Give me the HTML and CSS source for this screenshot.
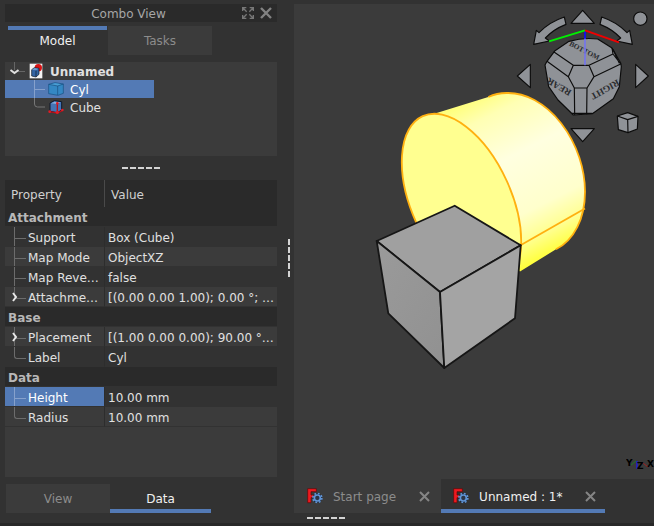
FILE: index.html
```html
<!DOCTYPE html>
<html lang="en">
<head>
<meta charset="utf-8">
<title>Unnamed : 1*</title>
<link rel="stylesheet" href="styles.css">
</head>
<body>
<div class="app">
  <aside class="dock">
    <header class="dock-title">
      <h1>Combo View</h1>
      <button class="icon-btn" aria-label="Float"><svg width="12" height="12" viewBox="0 0 36 36" fill="none" stroke="#777" stroke-width="4"><path d="M2 12V2h11M23 2h11v10M34 24v10H23M13 34H2V24M4 4l10 10M32 4L22 14M32 32L22 22M4 32l10-10"/></svg></button>
      <button class="icon-btn" aria-label="Close panel"><svg width="12" height="12" viewBox="0 0 12 12" fill="none" stroke="#828282" stroke-width="2.400"><path d="M1 1l10 10M11 1L1 11"/></svg></button>
    </header>

    <div class="tabs top-tabs" role="tablist">
      <button class="tab active" role="tab" aria-selected="true">Model</button>
      <button class="tab" role="tab" aria-selected="false">Tasks</button>
    </div>

    <ul class="tree">
      <li class="node root">
        <svg class="branch" width="24" height="18" viewBox="0 0 24 18" fill="none"><path d="M9.500 0v8M12 9.500h8" stroke="#666"/><path d="M5.500 8l4 3 4-3" stroke="#e0e0e0" stroke-width="2"/></svg>
        <svg class="node-icon" width="14" height="16" viewBox="0 0 42 48"><path fill="#f4f4f4" d="M2 2h38v44H2z"/><circle cx="28" cy="14" r="11" fill="#d81416"/><path d="M8 20l8-6 14 2v18l-9 8-13-3z" fill="#3465a4" stroke="#0b1521" stroke-width="2"/><path d="M9 20l8-5 12 2-8 5z" fill="#6d9bd0"/><path d="M21 23v18" fill="none" stroke="#0b1521" stroke-width="2"/></svg>
        <span>Unnamed</span>
      </li>
      <li class="node child selected">
        <svg class="branch" width="24" height="18" viewBox="0 0 24 18" fill="none" stroke="#86a1cc"><path d="M9.500 0v18M10 9.500h10"/></svg>
        <svg class="node-icon" width="16" height="14" viewBox="0 0 48 42"><path fill="#3488c4" stroke="#174e80" stroke-width="2" stroke-linejoin="round" d="M2 7L21 2l25 4v28l-16 6L2 35z"/><path fill="#4a9fd4" d="M5 8l16-4 20 3-12 4z"/><path fill="none" stroke="#194f7e" stroke-width="2" d="M2 7l27 5 17-6M29 12v27"/></svg>
        <span>Cyl</span>
      </li>
      <li class="node child">
        <svg class="branch" width="24" height="18" viewBox="0 0 24 18" fill="none" stroke="#777"><path d="M9.500 0v6q0 3 3 3h7.500"/></svg>
        <svg class="node-icon" width="16" height="14" viewBox="0 0 48 42"><path fill="#4573b5" stroke="#10192b" stroke-width="3" d="M6 9l13-7 22 3v25l-13 8-22-4z"/><path fill="#88aede" d="M9 10l11-5 17 2-9 5z"/><path fill="none" stroke="#b81018" stroke-width="4" d="M4 35l24 4 16-8M28 37V10"/><g fill="#e01b24"><circle cx="5" cy="35" r="4"/><circle cx="28" cy="37" r="5"/><circle cx="43" cy="30" r="4"/><circle cx="28" cy="10" r="4"/></g></svg>
        <span>Cube</span>
      </li>
    </ul>

    <div class="grip"></div>

    <div class="props">
      <table>
        <thead><tr><th scope="col">Property</th><th scope="col">Value</th></tr></thead>
        <tbody>
          <tr class="group"><th colspan="2">Attachment</th></tr>
          <tr><td class="name mid">Support</td><td>Box (Cube)</td></tr>
          <tr class="alt"><td class="name mid">Map Mode</td><td>ObjectXZ</td></tr>
          <tr><td class="name mid">Map Reve…</td><td>false</td></tr>
          <tr class="alt"><td class="name last"><svg class="expander" width="6" height="10" viewBox="0 0 6 10" fill="none" stroke="#e8e8e8" stroke-width="2"><path d="M1 1l3 4-3 4"/></svg>Attachme…</td><td>[(0.00 0.00 1.00); 0.00 °; …</td></tr>
          <tr class="group"><th colspan="2">Base</th></tr>
          <tr class="alt"><td class="name mid"><svg class="expander" width="6" height="10" viewBox="0 0 6 10" fill="none" stroke="#e8e8e8" stroke-width="2"><path d="M1 1l3 4-3 4"/></svg>Placement</td><td>[(1.00 0.00 0.00); 90.00 °…</td></tr>
          <tr><td class="name last">Label</td><td>Cyl</td></tr>
          <tr class="group"><th colspan="2">Data</th></tr>
          <tr class="current"><td class="name mid">Height</td><td>10.00 mm</td></tr>
          <tr class="alt"><td class="name last">Radius</td><td>10.00 mm</td></tr>
        </tbody>
      </table>
    </div>

    <div class="tabs bottom-tabs" role="tablist">
      <button class="tab" role="tab" aria-selected="false">View</button>
      <button class="tab active" role="tab" aria-selected="true">Data</button>
    </div>
  </aside>

  <div class="grip vertical"></div>

  <main class="workspace">
    <section class="viewport">
      <svg class="scene" viewBox="294 4 360 475" preserveAspectRatio="xMidYMid meet" role="img" aria-label="3D model">
        <defs>
          <linearGradient id="side" gradientUnits="userSpaceOnUse" x1="458" y1="104" x2="538" y2="262">
            <stop offset="0" stop-color="#ffff78"/><stop offset=".14" stop-color="#ffffb4"/><stop offset=".4" stop-color="#ffffe0"/><stop offset=".72" stop-color="#ffffcc"/><stop offset=".87" stop-color="#ffff90"/><stop offset="1" stop-color="#ffff38"/>
          </linearGradient>
          <linearGradient id="left" x1="0" y1="0" x2="1" y2="1"><stop offset="0" stop-color="#9a9a9a"/><stop offset="1" stop-color="#919191"/></linearGradient>
        </defs>
        <path fill="url(#side)" d="M435 113.500L488.300 97A83.200 58.700 69.200 0 1 508 93A83.200 58.700 69.200 0 1 585 191.700A83.200 58.700 69.200 0 1 556 249.300L520 271.500L450 230z"/>
        <path fill="none" stroke="#ffb010" stroke-width="1.800" d="M488.300 97A83.200 58.700 69.200 0 1 508 93A83.200 58.700 69.200 0 1 585 191.700A83.200 58.700 69.200 0 1 556 249.300"/>
        <ellipse cx="461.500" cy="201.700" rx="93.900" ry="49.800" transform="rotate(65.600 461.500 201.700)" fill="#ffff90" stroke="#ffb010" stroke-width="1.800"/>
        <path stroke="#ffb010" stroke-width="1.800" d="M521 245l64-36.500"/>
        <g stroke="#161616" stroke-width="1.800" stroke-linejoin="round">
          <path fill="#a0a0a0" d="M376.700 241L454.700 205.700L520.700 245.300L440 292z"/>
          <path fill="url(#left)" d="M376.700 241L440 292L444.300 368L388.300 313.300z"/>
          <path fill="#a4a4a4" d="M440 292L520.700 245.300L515 318.300L444.300 368z"/>
        </g>
      </svg>
      <svg class="navcube" width="144" height="146" viewBox="0 12 432 438" role="img" aria-label="Navigation cube">
        <g fill="#8f9297" stroke="#0c0c0c" stroke-width="3.500" stroke-linejoin="round">
          <path d="M218 31l35 39h-70zM218 425l-35-39h70zM22 228l39-35v70zM415 228l-38-35v70z"/>
          <circle cx="391" cy="56" r="20"/>
          <path d="M163 51Q118 66 87 98L79 91L71 133L118 123L106 114Q130 88 168 73z"/>
          <path d="M275 51Q320 66 351 98L359 91L367 133L320 123L332 114Q308 88 270 73z"/>
          <path d="M322 348l31-10 31 11-2 38-28 11-29-9z"/><path fill="none" d="M322 348l31 11 31-10M353 359l1 38"/>
          <path d="M135 152L177 124Q218 112 263 117L306 144L332 189L334 200L328 260L310 296L247 341L190 345L144 300L116 260L105 195L111 184z"/>
          <path fill="none" d="M131 155L190 196H237L309 162L306 144M190 196L175 230L193 264H231L252 230L237 196M111 184L175 230M252 230L332 192L309 162M193 264L194 345M231 264L230 343M309 148L328 190M186 340H247"/>
        </g>
        <g class="face-label">
          <text font-size="22" transform="translate(176 136) rotate(27)">BOTTOM</text>
          <text font-size="28" transform="translate(186 272) rotate(210)">REAR</text>
          <text font-size="28" transform="translate(322 238) rotate(151)">RIGHT</text>
        </g>
        <path d="M225 92v104" stroke="#7474ef" stroke-width="5"/><path d="M225 92v24" stroke="#0000e8" stroke-width="5"/>
        <path d="M117 124l108-33" stroke="#00f000" stroke-width="6"/><path d="M225 91l102 36" stroke="#f00000" stroke-width="6"/>
      </svg>
      <svg class="axes" width="28" height="16" viewBox="0 0 28 16"><path d="M5 8l5-4" stroke="#1b7a25"/><path d="M11 4v8" stroke="#2525b0" stroke-width="2"/><path d="M17 6l5 4" stroke="#a02020"/><g class="axis-label"><text x="0" y="9">Y</text><text x="11" y="12">Z</text><text x="21" y="10">X</text></g></svg>
    </section>

    <div class="doc-tabs">
      <div class="doc-tab">
        <svg width="16" height="16" viewBox="0 0 48 48"><path fill="#ee1a20" stroke="#5d0808" stroke-width="2" d="M2 2h26v9H12v10h12v8H12v15H2z"/><circle cx="31" cy="30" r="14" fill="#1b2740"/><circle cx="31" cy="30" r="9" fill="#2c3444" stroke="#6094d4" stroke-width="5"/><circle cx="31" cy="30" r="13.500" fill="none" stroke="#6094d4" stroke-width="5" stroke-dasharray="5.300 5.300"/></svg>
        <button class="doc-name">Start page</button>
        <button class="icon-btn" aria-label="Close Start page"><svg width="11" height="11" viewBox="0 0 11 11" stroke="#858585" stroke-width="2"><path d="M1 1l9 9M10 1L1 10"/></svg></button>
      </div>
      <div class="doc-tab active">
        <svg width="16" height="16" viewBox="0 0 48 48"><path fill="#ee1a20" stroke="#5d0808" stroke-width="2" d="M2 2h26v9H12v10h12v8H12v15H2z"/><circle cx="31" cy="30" r="14" fill="#1b2740"/><circle cx="31" cy="30" r="9" fill="#2c3444" stroke="#6094d4" stroke-width="5"/><circle cx="31" cy="30" r="13.500" fill="none" stroke="#6094d4" stroke-width="5" stroke-dasharray="5.300 5.300"/></svg>
        <button class="doc-name">Unnamed : 1*</button>
        <button class="icon-btn" aria-label="Close Unnamed"><svg width="11" height="11" viewBox="0 0 11 11" stroke="#858585" stroke-width="2"><path d="M1 1l9 9M10 1L1 10"/></svg></button>
      </div>
    </div>
    <div class="grip bottom"></div>
  </main>
</div>
</body>
</html>
```
FILE: styles.css
```css
* { box-sizing: border-box; }
body {
  margin: 0;
  background: #323232;
  color: #e0e0e0;
  font: 12px/18px "DejaVu Sans", sans-serif;
}
button {
  padding: 0;
  border: 0;
  background: none;
  color: inherit;
  font: inherit;
}
svg { display: block; flex: none; }
.app {
  display: grid;
  grid-template-columns: 280px 14px minmax(0, 1fr);
  min-height: 100vh;
  padding-top: 4px;
  border-bottom: 3px solid #282828;
}

/* Dock */
.dock {
  display: flex;
  flex-direction: column;
  padding: 0 3px 10px 5px;
}
.dock-title {
  display: flex;
  align-items: center;
  gap: 6px;
  height: 18px;
  padding-right: 5px;
  background: #2a2a2a;
}
.dock-title h1 {
  flex: 1;
  margin: 0;
  padding: 2px 0 0 16px;
  color: #a6a6a6;
  font: inherit;
  text-align: center;
}
.tabs { display: flex; }
.tab {
  width: 104px;
  height: 29px;
  background: #3b3b3b;
  color: #8c8c8c;
}
.tab.active { background: #323232; color: #f0f0f0; }
.top-tabs { gap: 1px; margin: 4px 0 7px 3px; }
.top-tabs .tab.active { width: 99px; border-top: 4px solid #537ab5; padding-bottom: 4px; }
.bottom-tabs { margin: 7px 0 0 1px; }
.bottom-tabs .tab.active { width: 101px; border-bottom: 4px solid #537ab5; padding-top: 4px; }

/* Tree */
.tree {
  height: 94px;
  margin: 0;
  padding: 0;
  background: #3b3b3b;
  list-style: none;
}
.node {
  display: flex;
  align-items: center;
  height: 18px;
}
.node span { padding-top: 2px; }
.root { font-weight: 700; }
.root .node-icon { margin-right: 7px; }
.child { width: 149px; padding-left: 20px; }
.child .node-icon { margin: 0 6px 0 -1px; }
.selected { background: #537ab5; color: #fff; }

/* Splitter grips */
.grip {
  width: 38px;
  height: 2px;
  margin: 11px auto;
  background: repeating-linear-gradient(90deg, #d4d4d4 0 6px, transparent 6px 8px);
}
.grip.vertical {
  width: 2px;
  height: 38px;
  margin: 0 0 12px 8px;
  align-self: center;
  background: repeating-linear-gradient(#d4d4d4 0 6px, transparent 6px 8px);
}
.grip.bottom { margin: 4px 0 4px 13px; }

/* Property editor */
.props { flex: 1; background: #3b3b3b; }
table {
  width: 100%;
  border-collapse: separate;
  border-spacing: 0;
  table-layout: fixed;
}
th, td {
  overflow: hidden;
  height: 20px;
  padding: 3px 0 0 3px;
  border-bottom: 1px solid #323232;
  line-height: 16px;
  text-align: left;
  text-overflow: ellipsis;
  white-space: nowrap;
}
td { background: #323232; }
thead th {
  height: 27px;
  padding: 2px 0 0 6px;
  border: 0;
  background: #2a2a2a;
  color: #d0d0d0;
  font-weight: 400;
}
thead th:first-child { width: 100px; border-right: 1px solid #4a4a4a; }
.group th { background: #2a2a2a; color: #b8b8b8; }
.alt td { background: #3b3b3b; }
.name {
  position: relative;
  padding-left: 23px;
  border-right: 1px solid #2d2d2d;
}
.name::before {
  content: "";
  position: absolute;
  top: 0;
  left: 9px;
  width: 11px;
  height: 11px;
  border: solid #6c6c6c;
  border-width: 0 0 1px 1px;
}
.last::before { border-bottom-left-radius: 3px; }
.mid::after {
  content: "";
  position: absolute;
  top: 0;
  bottom: 0;
  left: 9px;
  width: 1px;
  background: #6c6c6c;
}
.expander { position: absolute; z-index: 1; top: 5px; left: 7px; }
.current .name { background: #537ab5; color: #fff; }
.current .name::before { border-color: #86a1cc; }
.current .name::after { background: #86a1cc; }

/* Workspace */
.workspace { display: flex; flex-direction: column; }
.viewport {
  position: relative;
  display: flex;
  flex: 1;
  min-height: 0;
  background: #3b3b3b;
}
.scene { flex: 1; width: 100%; height: 100%; min-width: 0; }
.navcube { position: absolute; top: 0; right: 0; }
.face-label {
  fill: #2a2c2f;
  font-family: "Liberation Serif", serif;
  font-weight: 700;
}
.axes { position: absolute; right: 0; bottom: 6px; }
.axis-label { font-size: 9px; font-weight: 700; }
.doc-tabs { display: flex; height: 34px; }
.doc-tab {
  display: flex;
  align-items: center;
  gap: 10px;
  padding: 0 11px 0 13px;
  background: #3b3b3b;
  color: #8c8c8c;
}
.doc-tab.active {
  padding: 4px 9px 0 12px;
  border-bottom: 4px solid #537ab5;
  background: #323232;
  color: #f0f0f0;
}
.doc-name { margin-right: 13px; padding-top: 2px; }
```
